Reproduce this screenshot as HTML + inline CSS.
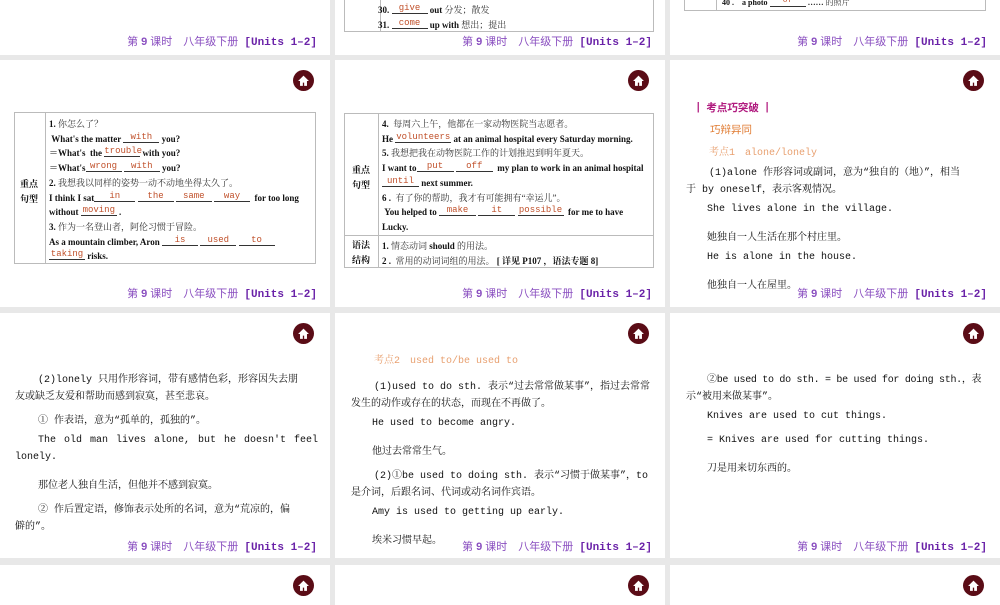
<!DOCTYPE html>
<html><head><meta charset="utf-8"><style>
*{margin:0;padding:0;box-sizing:border-box}
body{width:1000px;height:600px;background:#e8e8e8;position:relative;overflow:hidden;font-family:"Liberation Serif","Noto Serif CJK SC",serif}
.p{position:absolute;background:#fff;overflow:hidden}
.ft{position:absolute;right:13px;font-size:11px;color:#8a4fc0;white-space:nowrap;font-family:"Liberation Sans","Noto Sans CJK SC",sans-serif}
.ft b{font-weight:bold}
.ft .u{font-family:"Liberation Mono",monospace;font-weight:bold;color:#6a22a8;margin-left:3px}
.home{position:absolute;right:16px;width:21px;height:21px;border-radius:50%;background:#5a0c16}
.home svg{position:absolute;left:4px;top:4px}
.t{position:absolute;font-size:9px;font-weight:bold;color:#111;line-height:14.7px}
.t .c{font-weight:normal;color:#333;font-family:"Liberation Serif","Noto Serif CJK SC",serif}
.a{display:inline-block;border-bottom:1px solid #333;color:#c0502a;font-family:"Liberation Mono",monospace;font-weight:normal;text-align:center;line-height:10px;vertical-align:3px}
.m{position:absolute;font-family:"Liberation Mono","Noto Serif CJK SC",monospace;font-size:10px;color:#111;white-space:nowrap}
</style></head><body>

<!-- row1 -->
<div class="p" style="left:0;top:0;width:330px;height:55px"><div class="ft" style="top:33px">第 <b>9</b> 课时　八年级下册 <span class="u">[Units 1–2]</span></div></div>
<div class="p" style="left:335px;top:0;width:330px;height:55px">
<div style="position:absolute;left:9px;top:-2px;width:310px;height:34px;border:1px solid #bbb;border-top:none"></div>
<div style="position:absolute;left:45px;top:0;width:1px;height:32px;background:#bbb"></div>
<div class="t" style="left:43px;top:3px">30. <span class="a" style="width:36px">give</span> out <span class="c">分发；散发</span><br>31. <span class="a" style="width:36px">come</span> up with <span class="c">想出；提出</span></div>
<div class="ft" style="top:33px">第 <b>9</b> 课时　八年级下册 <span class="u">[Units 1–2]</span></div></div>
<div class="p" style="left:670px;top:0;width:330px;height:55px">
<div style="position:absolute;left:14px;top:-2px;width:302px;height:13px;border:1px solid #bbb;border-top:none"></div>
<div style="position:absolute;left:46px;top:0;width:1px;height:11px;background:#bbb"></div>
<div class="t" style="left:52px;top:-4px;font-size:8px">40 .　a photo <span class="a" style="width:36px">of</span> …… <span class="c">的照片</span></div>
<div class="ft" style="top:33px">第 <b>9</b> 课时　八年级下册 <span class="u">[Units 1–2]</span></div></div>

<!-- row2 -->
<div class="p" style="left:0;top:60px;width:330px;height:247px">
<div class="home" style="top:10px"><svg width="13" height="13" viewBox="0 0 12 12"><path d="M6 1.5L1 6.5h1.8V11h2.6V8h1.2v3h2.6V6.5H11z" fill="#fff"/></svg></div>
<div style="position:absolute;left:14px;top:52px;width:302px;height:152px;border:1px solid #bbb"></div>
<div style="position:absolute;left:45px;top:52px;width:1px;height:152px;background:#bbb"></div>
<div class="t" style="left:20px;top:117px;line-height:15px">重点<br>句型</div>
<div class="t" style="left:49px;top:57px;white-space:nowrap">1. <span class="c">你怎么了？</span><br>&nbsp;What's the matter <span class="a" style="width:36px">with</span> you?<br>＝What's&nbsp; the <span class="a" style="width:36px">trouble</span> with you?<br>＝What's<span class="a" style="width:36px">wrong</span> <span class="a" style="width:36px">with</span> you?<br>2. <span class="c">我想我以同样的姿势一动不动地坐得太久了。</span><br>I think I sat<span class="a" style="width:41px">in</span> <span class="a" style="width:36px">the</span> <span class="a" style="width:36px">same</span> <span class="a" style="width:36px">way</span> &nbsp;for too long<br>without <span class="a" style="width:36px">moving</span> .<br>3. <span class="c">作为一名登山者，阿伦习惯于冒险。</span><br>As a mountain climber, Aron <span class="a" style="width:36px">is</span> <span class="a" style="width:36px">used</span> <span class="a" style="width:36px">to</span><br><span class="a" style="width:36px">taking</span> risks.</div>
<div class="ft" style="top:225px">第 <b>9</b> 课时　八年级下册 <span class="u">[Units 1–2]</span></div></div>

<div class="p" style="left:335px;top:60px;width:330px;height:247px">
<div class="home" style="top:10px"><svg width="13" height="13" viewBox="0 0 12 12"><path d="M6 1.5L1 6.5h1.8V11h2.6V8h1.2v3h2.6V6.5H11z" fill="#fff"/></svg></div>
<div style="position:absolute;left:9px;top:53px;width:310px;height:155px;border:1px solid #bbb"></div>
<div style="position:absolute;left:9px;top:175px;width:310px;height:1px;background:#bbb"></div>
<div style="position:absolute;left:43px;top:53px;width:1px;height:155px;background:#bbb"></div>
<div class="t" style="left:17px;top:103px;line-height:15px">重点<br>句型</div>
<div class="t" style="left:17px;top:178px;line-height:15px">语法<br>结构</div>
<div class="t" style="left:47px;top:57px;white-space:nowrap">4.&nbsp; <span class="c">每周六上午，他都在一家动物医院当志愿者。</span><br>He <span class="a" style="width:56px">volunteers</span> at an animal hospital every Saturday morning.<br>5. <span class="c">我想把我在动物医院工作的计划推迟到明年夏天。</span><br>I want to<span class="a" style="width:37px">put</span> <span class="a" style="width:37px">off</span> &nbsp;my plan to work in an animal hospital<br><span class="a" style="width:37px">until</span> next summer.<br>6 .&nbsp; <span class="c">有了你的帮助，我才有可能拥有“幸运儿”。</span><br>&nbsp;You helped to <span class="a" style="width:37px">make</span> <span class="a" style="width:37px">it</span> <span class="a" style="width:46px">possible</span> &nbsp;for me to have<br>Lucky.</div>
<div class="t" style="left:47px;top:179px;white-space:nowrap">1. <span class="c">情态动词</span> should <span class="c">的用法。</span><br>2 .&nbsp; <span class="c">常用的动词词组的用法。</span> [ 详见 P107 ，语法专题 8]</div>
<div class="ft" style="top:225px">第 <b>9</b> 课时　八年级下册 <span class="u">[Units 1–2]</span></div></div>

<div class="p" style="left:670px;top:60px;width:330px;height:247px">
<div class="home" style="top:10px"><svg width="13" height="13" viewBox="0 0 12 12"><path d="M6 1.5L1 6.5h1.8V11h2.6V8h1.2v3h2.6V6.5H11z" fill="#fff"/></svg></div>
<div class="m" style="left:23px;top:40px;color:#b0197e;font-weight:bold;font-size:10.5px;font-family:'Liberation Sans','Noto Sans CJK SC',sans-serif">┃ 考点巧突破 ┃</div>
<div class="m" style="left:40px;top:62px;color:#e07a30;font-size:10.5px;font-family:'Liberation Sans','Noto Sans CJK SC',sans-serif">巧辩异同</div>
<div class="m" style="left:39px;top:83px;color:#e8a070">考点1　alone/lonely</div>
<div class="m" style="left:39px;top:103px">(1)alone 作形容词或副词，意为“独自的（地）”，相当</div>
<div class="m" style="left:16px;top:120px">于 by oneself，表示客观情况。</div>
<div class="m" style="left:37px;top:144px">She lives alone in the village.</div>
<div class="m" style="left:37px;top:168px">她独自一人生活在那个村庄里。</div>
<div class="m" style="left:37px;top:192px">He is alone in the house.</div>
<div class="m" style="left:37px;top:216px">他独自一人在屋里。</div>
<div class="ft" style="top:225px">第 <b>9</b> 课时　八年级下册 <span class="u">[Units 1–2]</span></div></div>

<!-- row3 -->
<div class="p" style="left:0;top:313px;width:330px;height:245px">
<div class="home" style="top:10px"><svg width="13" height="13" viewBox="0 0 12 12"><path d="M6 1.5L1 6.5h1.8V11h2.6V8h1.2v3h2.6V6.5H11z" fill="#fff"/></svg></div>
<div class="m" style="left:38px;top:57px">(2)lonely 只用作形容词，带有感情色彩，形容因失去朋</div>
<div class="m" style="left:15px;top:74px">友或缺乏友爱和帮助而感到寂寞，甚至悲哀。</div>
<div class="m" style="left:38px;top:98px">① 作表语，意为“孤单的，孤独的”。</div>
<div class="m" style="left:38px;top:122px;word-spacing:2px">The old man lives alone, but he doesn't feel</div>
<div class="m" style="left:15px;top:139px">lonely.</div>
<div class="m" style="left:38px;top:163px">那位老人独自生活，但他并不感到寂寞。</div>
<div class="m" style="left:38px;top:187px">② 作后置定语，修饰表示处所的名词，意为“荒凉的，偏</div>
<div class="m" style="left:15px;top:204px">僻的”。</div>
<div class="ft" style="top:225px">第 <b>9</b> 课时　八年级下册 <span class="u">[Units 1–2]</span></div></div>

<div class="p" style="left:335px;top:313px;width:330px;height:245px">
<div class="home" style="top:10px"><svg width="13" height="13" viewBox="0 0 12 12"><path d="M6 1.5L1 6.5h1.8V11h2.6V8h1.2v3h2.6V6.5H11z" fill="#fff"/></svg></div>
<div class="m" style="left:39px;top:38px;color:#e8a070">考点2　used to/be used to</div>
<div class="m" style="left:39px;top:64px">(1)used to do sth. 表示“过去常常做某事”，指过去常常</div>
<div class="m" style="left:16px;top:81px">发生的动作或存在的状态，而现在不再做了。</div>
<div class="m" style="left:37px;top:105px">He used to become angry.</div>
<div class="m" style="left:37px;top:129px">他过去常常生气。</div>
<div class="m" style="left:39px;top:153px">(2)①be used to doing sth. 表示“习惯于做某事”，to</div>
<div class="m" style="left:16px;top:170px">是介词，后跟名词、代词或动名词作宾语。</div>
<div class="m" style="left:37px;top:194px">Amy is used to getting up early.</div>
<div class="m" style="left:37px;top:218px">埃米习惯早起。</div>
<div class="ft" style="top:225px">第 <b>9</b> 课时　八年级下册 <span class="u">[Units 1–2]</span></div></div>

<div class="p" style="left:670px;top:313px;width:330px;height:245px">
<div class="home" style="top:10px"><svg width="13" height="13" viewBox="0 0 12 12"><path d="M6 1.5L1 6.5h1.8V11h2.6V8h1.2v3h2.6V6.5H11z" fill="#fff"/></svg></div>
<div class="m" style="left:37px;top:57px;letter-spacing:-0.3px">②be used to do sth. = be used for doing sth.，表</div>
<div class="m" style="left:16px;top:74px">示“被用来做某事”。</div>
<div class="m" style="left:37px;top:98px">Knives are used to cut things.</div>
<div class="m" style="left:37px;top:122px">= Knives are used for cutting things.</div>
<div class="m" style="left:37px;top:146px">刀是用来切东西的。</div>
<div class="ft" style="top:225px">第 <b>9</b> 课时　八年级下册 <span class="u">[Units 1–2]</span></div></div>

<!-- row4 -->
<div class="p" style="left:0;top:565px;width:330px;height:40px"><div class="home" style="top:10px"><svg width="13" height="13" viewBox="0 0 12 12"><path d="M6 1.5L1 6.5h1.8V11h2.6V8h1.2v3h2.6V6.5H11z" fill="#fff"/></svg></div></div>
<div class="p" style="left:335px;top:565px;width:330px;height:40px"><div class="home" style="top:10px"><svg width="13" height="13" viewBox="0 0 12 12"><path d="M6 1.5L1 6.5h1.8V11h2.6V8h1.2v3h2.6V6.5H11z" fill="#fff"/></svg></div></div>
<div class="p" style="left:670px;top:565px;width:330px;height:40px"><div class="home" style="top:10px"><svg width="13" height="13" viewBox="0 0 12 12"><path d="M6 1.5L1 6.5h1.8V11h2.6V8h1.2v3h2.6V6.5H11z" fill="#fff"/></svg></div></div>

</body></html>
